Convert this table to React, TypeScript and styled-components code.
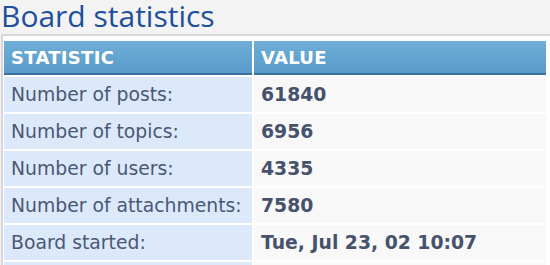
import React from 'react';
import styled, { createGlobalStyle } from 'styled-components';

const GlobalStyle = createGlobalStyle`
    html, body {
        margin: 0;
        padding: 0;
        background: #f3f3f3;
    }
`;

const Page = styled.div`
    width: 550px;
    height: 265px;
    overflow: hidden;
`;

const Title = styled.h2`
    margin: 0;
    padding: 0 0 0 1px;
    height: 34px;
    font-family: "Open Sans", "DejaVu Sans", sans-serif;
    font-weight: 400;
    font-size: 30px;
    line-height: 32px;
    color: #1d4f9c;
    white-space: nowrap;
`;

const Panel = styled.div`
    margin-left: 1px;
    border-top: 2px solid #d6d6dc;
    border-left: 2px solid #d6d6dc;
    background: #fff;
    padding: 3px 0 0 1px;
`;

const StatsTable = styled.table`
    width: 100%;
    border-collapse: separate;
    border-spacing: 2px;
    margin: 0 0 0 -2px;
    font-family: "DejaVu Sans", Verdana, sans-serif;
    font-size: 18.8px;
`;

const HeadCell = styled.th<{ $wide?: boolean }>`
    height: 34px;
    padding: 0 0 0 7px;
    text-align: left;
    width: ${p => (p.$wide ? 'auto' : '248px')};
    box-sizing: border-box;
    background: linear-gradient(#6eaed8, #5a9bca);
    border-bottom: 2px solid #36719f;
    color: #fff;
    font-size: 18px;
    font-weight: 700;
    letter-spacing: 0.3px;
`;

const LabelCell = styled.td`
    height: 35px;
    padding: 0 0 0 7px;
    box-sizing: border-box;
    background: #dce9fb;
    color: #4b5873;
    white-space: nowrap;
`;

const ValueCell = styled.td`
    height: 35px;
    padding: 0 0 0 7px;
    box-sizing: border-box;
    background: #f8f8f8;
    color: #46526b;
    font-weight: 700;
    white-space: nowrap;
`;

const stats = [
    { label: 'Number of posts:', value: '61840' },
    { label: 'Number of topics:', value: '6956' },
    { label: 'Number of users:', value: '4335' },
    { label: 'Number of attachments:', value: '7580' },
    { label: 'Board started:', value: 'Tue, Jul 23, 02 10:07' },
    { label: 'Board version:', value: '1.0' },
];

const App: React.FC = () => {
    return (
        <Page>
            <GlobalStyle />
            <Title>Board statistics</Title>
            <Panel>
                <StatsTable>
                    <thead>
                        <tr>
                            <HeadCell>STATISTIC</HeadCell>
                            <HeadCell $wide>VALUE</HeadCell>
                        </tr>
                    </thead>
                    <tbody>
                        {stats.map(s => (
                            <tr key={s.label}>
                                <LabelCell>{s.label}</LabelCell>
                                <ValueCell>{s.value}</ValueCell>
                            </tr>
                        ))}
                    </tbody>
                </StatsTable>
            </Panel>
        </Page>
    );
}

export default App;
